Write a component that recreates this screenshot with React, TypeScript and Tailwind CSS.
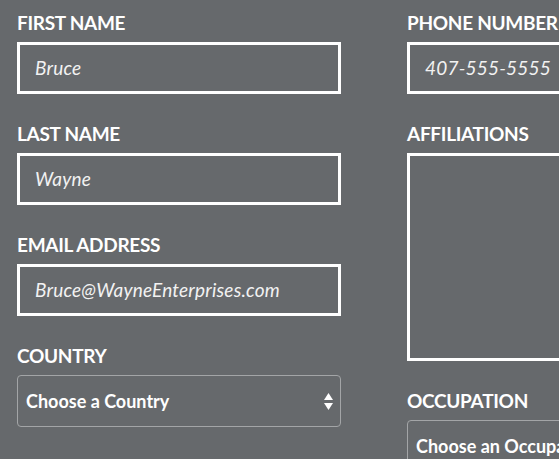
import React from "react";

const lato = "font-['Lato','Liberation_Sans',sans-serif]";

function Label({ children }: { children: React.ReactNode }) {
  return (
    <div className="text-[19px] leading-[24px] font-bold text-white mb-[7px] tracking-[-0.3px] whitespace-nowrap">
      {children}
    </div>
  );
}

function TextBox({ value }: { value: string }) {
  return (
    <div className="h-[52px] border-[3px] border-white flex items-center pl-[15px]">
      <span className="italic text-[19px] tracking-[0.2px] text-[#f2f2f2]">{value}</span>
    </div>
  );
}

function SelectBox({ value }: { value: string }) {
  return (
    <div className="h-[52px] border border-[#a3a5a7] rounded-[4px] flex items-center justify-between pl-[8px] pr-[7px]">
      <span className="text-[18px] font-bold text-white whitespace-nowrap">{value}</span>
      <svg width="9" height="17" viewBox="0 0 9 17" className="shrink-0">
        <polygon points="4.5,0 9,7 0,7" fill="#ffffff" />
        <polygon points="0,10 9,10 4.5,17" fill="#ffffff" />
      </svg>
    </div>
  );
}

export default function App() {
  return (
    <div className={`${lato} w-[559px] h-[459px] overflow-hidden bg-[#66696c]`}>
      <div className="grid grid-cols-[324px_324px] gap-x-[66px] pl-[17px] pt-[11px]">
        {/* left column */}
        <div className="flex flex-col">
          <div className="mb-[28px]">
            <Label>FIRST NAME</Label>
            <TextBox value="Bruce" />
          </div>
          <div className="mb-[28px]">
            <Label>LAST NAME</Label>
            <TextBox value="Wayne" />
          </div>
          <div className="mb-[28px]">
            <Label>EMAIL ADDRESS</Label>
            <TextBox value="Bruce@WayneEnterprises.com" />
          </div>
          <div>
            <Label>COUNTRY</Label>
            <SelectBox value="Choose a Country" />
          </div>
        </div>

        {/* right column */}
        <div className="flex flex-col">
          <div className="mb-[28px]">
            <Label>PHONE NUMBER</Label>
            <TextBox value="407-555-5555" />
          </div>
          <div className="mb-[28px]">
            <Label>AFFILIATIONS</Label>
            <div className="h-[208px] border-[3px] border-white" />
          </div>
          <div>
            <Label>OCCUPATION</Label>
            <SelectBox value="Choose an Occupation" />
          </div>
        </div>
      </div>
    </div>
  );
}
